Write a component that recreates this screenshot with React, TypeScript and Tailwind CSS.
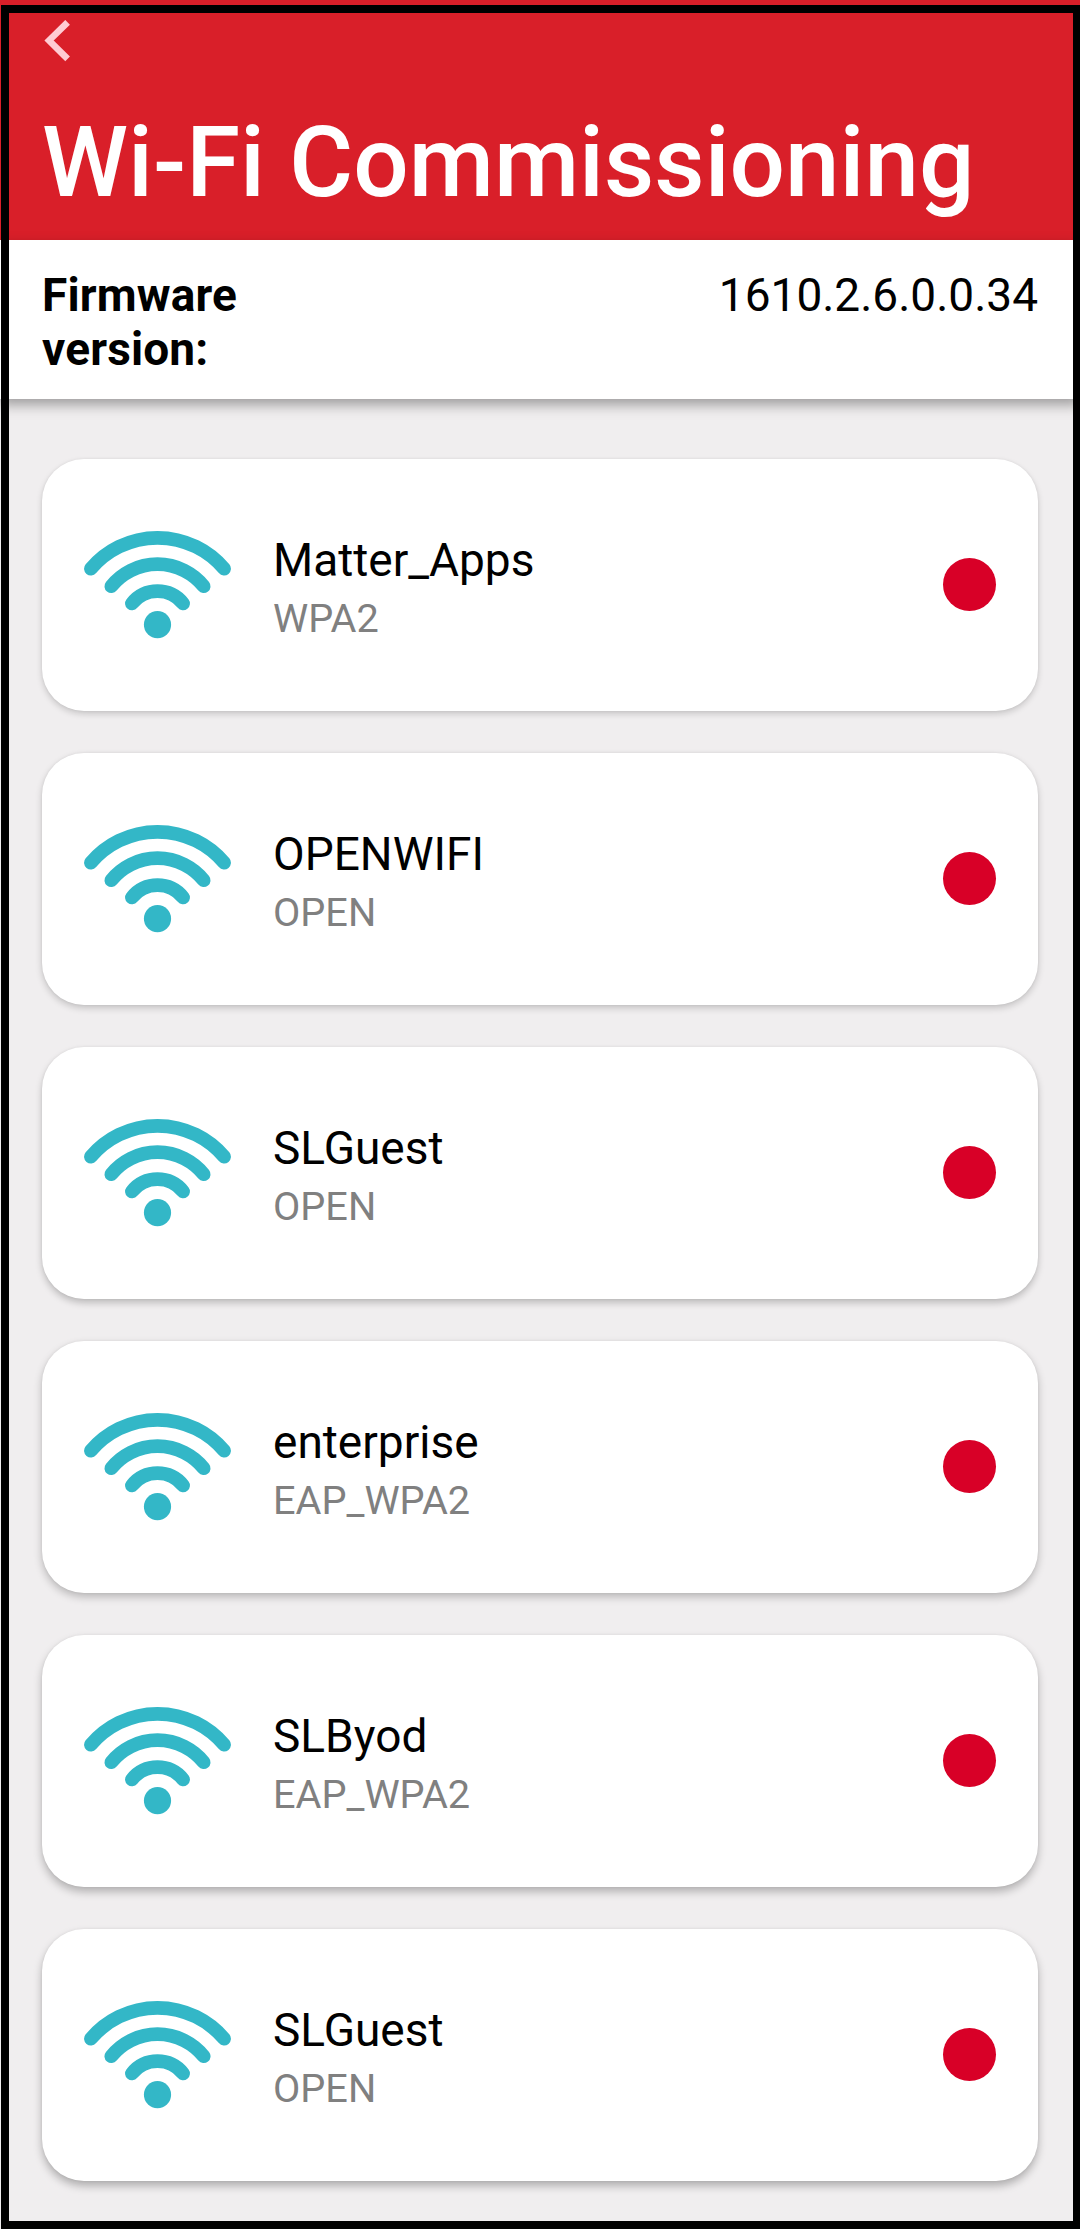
const networks = [
  { ssid: 'Matter_Apps', security: 'WPA2', shadow: 'shadow-[0_3px_6px_rgba(0,0,0,0.17),0_0_3px_rgba(0,0,0,0.06)]' },
  { ssid: 'OPENWIFI', security: 'OPEN', shadow: 'shadow-[0_3px_7px_rgba(0,0,0,0.19),0_0_3px_rgba(0,0,0,0.06)]' },
  { ssid: 'SLGuest', security: 'OPEN', shadow: 'shadow-[0_4px_7px_rgba(0,0,0,0.21),0_0_3px_rgba(0,0,0,0.06)]' },
  { ssid: 'enterprise', security: 'EAP_WPA2', shadow: 'shadow-[0_4px_8px_rgba(0,0,0,0.23),0_0_3px_rgba(0,0,0,0.06)]' },
  { ssid: 'SLByod', security: 'EAP_WPA2', shadow: 'shadow-[0_5px_8px_rgba(0,0,0,0.25),0_0_3px_rgba(0,0,0,0.06)]' },
  { ssid: 'SLGuest', security: 'OPEN', shadow: 'shadow-[0_5px_9px_rgba(0,0,0,0.27),0_0_3px_rgba(0,0,0,0.06)]' },
];

function BackIcon() {
  return (
    <svg width="30" height="42" viewBox="0 0 30 42" fill="none" aria-hidden="true">
      <path d="M25.6 2.3 7.1 20.5 25.6 38.9" stroke="#ffccd3" strokeWidth="6.6" />
    </svg>
  );
}

function WifiIcon() {
  return (
    <svg
      width="147"
      height="110"
      viewBox="0 0 147 110"
      fill="none"
      stroke="#33b7c7"
      strokeWidth="13.7"
      strokeLinecap="round"
      className="shrink-0"
      aria-hidden="true"
    >
      <path d="M6.9 38.7A87.2 87.2 0 0 1 140.1 38.7" />
      <path d="M27.3 56.2A59.5 59.5 0 0 1 119.7 56.2" />
      <path d="M47.9 73.5A32.8 32.8 0 0 1 99.1 73.5" />
      <circle cx="73.5" cy="94.7" r="13.6" fill="#33b7c7" stroke="none" />
    </svg>
  );
}

type Network = (typeof networks)[number];

function NetworkCard({ ssid, security, shadow }: Network) {
  return (
    <li className={`flex h-[252px] items-center rounded-[42px] bg-white px-[42px] ${shadow}`}>
      <WifiIcon />
      <div className="ml-[42px] flex flex-1 flex-col gap-[9px] pt-[6px]">
        <span className="text-[46px] leading-[54px] text-black">{ssid}</span>
        <span className="text-[39.7px] leading-[46px] text-[#808080]">{security}</span>
      </div>
      <span className="mb-px size-[53px] rounded-full bg-[#d80027]" />
    </li>
  );
}

export default function App() {
  return (
    <div className="relative flex h-[2231px] w-[1080px] flex-col overflow-hidden bg-[#f0eeef] font-[Roboto,sans-serif]">
      <header className="flex h-[240px] shrink-0 flex-col bg-[#d91f29] pl-[42px] pt-5">
        <BackIcon />
        <h1 className="mt-[43px] whitespace-nowrap text-[97.8px] font-medium leading-[116px] text-white">
          Wi-Fi Commissioning
        </h1>
      </header>
      <section className="flex h-[158.5px] shrink-0 justify-between bg-white px-[42px] pt-7 text-[46px] leading-[54px] text-black shadow-[0_6px_12px_rgba(0,0,0,0.34)]">
        <span className="w-[240px] font-bold tracking-[0.15px]">Firmware version:</span>
        <span>1610.2.6.0.0.34</span>
      </section>
      <ul className="flex flex-col gap-[42px] px-[42px] pt-[60px]">
        {networks.map((network, i) => (
          <NetworkCard key={i} {...network} />
        ))}
      </ul>
      <div className="absolute inset-x-0 bottom-0 h-[2px] bg-white" />
      <div className="pointer-events-none absolute left-px top-[5px] h-[2224px] w-[1080px] border-8 border-black" />
    </div>
  );
}
